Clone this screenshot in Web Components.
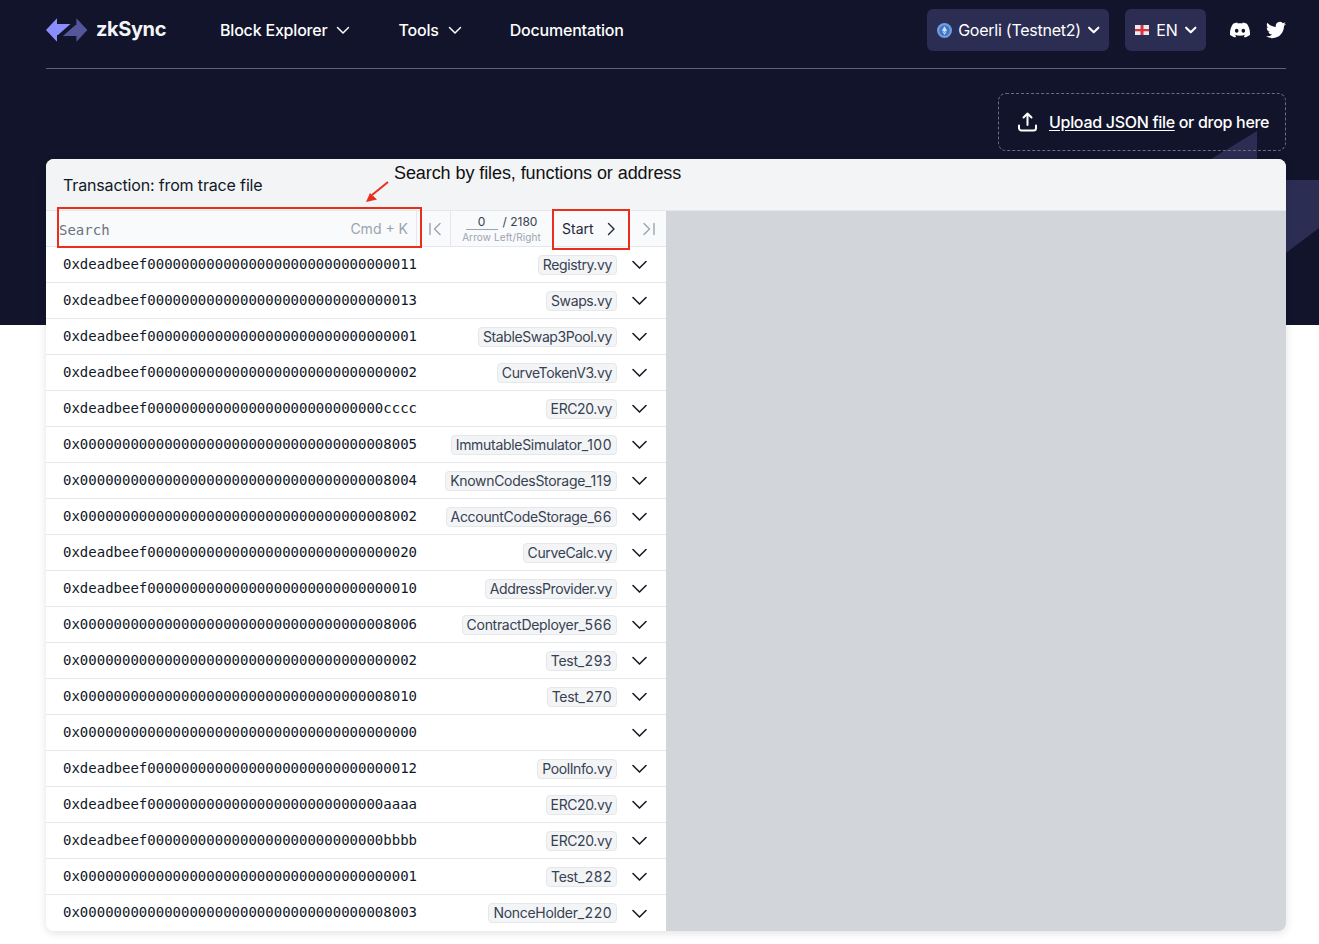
<!DOCTYPE html>
<html>
<head>
<meta charset="utf-8">
<title>zkSync trace viewer</title>
<style>
  html, body { margin: 0; padding: 0; background: #fff; }
  body { font-family: Inter, "Liberation Sans", sans-serif; color: #111827; }
</style>
</head>
<body>
<zk-page>
  <zk-header slot="header"></zk-header>
  <zk-upload slot="upload"></zk-upload>
  <zk-trace slot="trace">
    <zk-file addr="0xdeadbeef00000000000000000000000000000011" name="Registry.vy"></zk-file>
    <zk-file addr="0xdeadbeef00000000000000000000000000000013" name="Swaps.vy"></zk-file>
    <zk-file addr="0xdeadbeef00000000000000000000000000000001" name="StableSwap3Pool.vy"></zk-file>
    <zk-file addr="0xdeadbeef00000000000000000000000000000002" name="CurveTokenV3.vy"></zk-file>
    <zk-file addr="0xdeadbeef0000000000000000000000000000cccc" name="ERC20.vy"></zk-file>
    <zk-file addr="0x0000000000000000000000000000000000008005" name="ImmutableSimulator_100"></zk-file>
    <zk-file addr="0x0000000000000000000000000000000000008004" name="KnownCodesStorage_119"></zk-file>
    <zk-file addr="0x0000000000000000000000000000000000008002" name="AccountCodeStorage_66"></zk-file>
    <zk-file addr="0xdeadbeef00000000000000000000000000000020" name="CurveCalc.vy"></zk-file>
    <zk-file addr="0xdeadbeef00000000000000000000000000000010" name="AddressProvider.vy"></zk-file>
    <zk-file addr="0x0000000000000000000000000000000000008006" name="ContractDeployer_566"></zk-file>
    <zk-file addr="0x0000000000000000000000000000000000000002" name="Test_293"></zk-file>
    <zk-file addr="0x0000000000000000000000000000000000008010" name="Test_270"></zk-file>
    <zk-file addr="0x0000000000000000000000000000000000000000"></zk-file>
    <zk-file addr="0xdeadbeef00000000000000000000000000000012" name="PoolInfo.vy"></zk-file>
    <zk-file addr="0xdeadbeef0000000000000000000000000000aaaa" name="ERC20.vy"></zk-file>
    <zk-file addr="0xdeadbeef0000000000000000000000000000bbbb" name="ERC20.vy"></zk-file>
    <zk-file addr="0x0000000000000000000000000000000000000001" name="Test_282"></zk-file>
    <zk-file addr="0x0000000000000000000000000000000000008003" name="NonceHolder_220" last></zk-file>
  </zk-trace>
</zk-page>

<script>
const chevron = (w, sw) => `<svg width="${w}" height="${w}" viewBox="0 0 16 16" fill="none" stroke="currentColor" stroke-width="${sw}" stroke-linecap="round" stroke-linejoin="round"><path d="M2.5 5.5 8 11l5.5-5.5"/></svg>`;

// Page shell: dark hero behind the header and the top of the card.
class ZkPage extends HTMLElement {
  connectedCallback() {
    const root = this.attachShadow({mode: 'open'});
    root.innerHTML = `
      <style>
      :host { display: block; position: relative; height: 944px; overflow: hidden; }
      .hero { position: absolute; left: 0; top: 0; right: 0; height: 325px; background: #11142b; overflow: hidden; }
      .hero svg { position: absolute; left: 0; top: 0; }
      .content { position: relative; padding: 0 33px 0 46px; display: flex; flex-direction: column; }
      .upload { display: flex; justify-content: flex-end; padding: 24px 0 8px; }
      </style>
      <div class="hero">
        <svg width="1319" height="325" viewBox="0 0 1319 325"><path fill="#2b2d53" d="M1257 131 1211 159H1257ZM1286 180H1319V228L1286 253Z"/></svg>
      </div>
      <div class="content">
        <slot name="header"></slot>
        <div class="upload"><slot name="upload"></slot></div>
        <slot name="trace"></slot>
      </div>
    `;
  }
}

class ZkHeader extends HTMLElement {
  connectedCallback() {
    const root = this.attachShadow({mode: 'open'});
    root.innerHTML = `
      <style>
      :host { display: flex; align-items: center; height: 60px; padding-bottom: 8px; border-bottom: 1px solid #5f6175; color: #fff; font-size: 16px; font-weight: 500; letter-spacing: -0.2px; }
      .logo { display: flex; align-items: center; gap: 8px; width: 174px; }
      .logo span { font-size: 20px; font-weight: 700; letter-spacing: -0.4px; color: #f3f4f6; margin-top: -3px; }
      nav { display: flex; align-items: center; gap: 47px; flex: 1; }
      nav a { display: flex; align-items: center; gap: 8px; color: #fff; }
      .pill { display: flex; align-items: center; height: 42px; box-sizing: border-box; background: #2b2d53; border-radius: 6px; padding: 0 9px 0 10px; font-weight: 400; letter-spacing: -0.25px; }
      .pill svg.c { margin-left: 6px; }
      .net { margin-right: 16px; }
      .lang { margin-right: 24px; }
      .social { display: flex; align-items: center; gap: 16px; }
      </style>
      <div class="logo">
        <svg width="42" height="24" viewBox="0 0 42 24">
          <path fill="#53569a" d="M41.4 12 30.4 23.7V18H16.9L29.4 7H30.4V.3Z"/>
          <path fill="#8c8dfc" d="M0 12 11 .3V6H24.5L12 17H11V23.7Z"/>
        </svg>
        <span>zkSync</span>
      </div>
      <nav>
        <a>Block Explorer ${chevron(16, 1.5)}</a>
        <a>Tools ${chevron(16, 1.5)}</a>
        <a>Documentation</a>
      </nav>
      <div class="pill net">
        <svg width="15" height="15" viewBox="0 0 16 16" style="margin-right:6px">
          <circle cx="8" cy="8" r="8" fill="#6f9fe0"/>
          <circle cx="8" cy="8" r="5.6" fill="#3f74c4"/>
          <path fill="#cfe0f7" d="M8 3.4 5.3 8 8 9.6 10.7 8Z"/>
          <path fill="#cfe0f7" d="M5.3 8.7 8 12.6l2.7-3.9L8 10.3Z"/>
        </svg>
        Goerli (Testnet2) <svg class="c" width="13.5" height="13.5" viewBox="0 0 16 16" fill="none" stroke="currentColor" stroke-width="2.5" stroke-linecap="round" stroke-linejoin="round"><path d="M2.5 5.5 8 11l5.5-5.5"/></svg>
      </div>
      <div class="pill lang">
        <svg width="14" height="10" viewBox="0 0 14 10" style="margin-right:7px">
          <rect width="14" height="10" fill="#e8eaf0"/>
          <path fill="#d8343f" d="M5.5 0h3v4H14v2.2H8.5V10h-3V6.2H0V4h5.5Z"/>
        </svg>
        EN <svg class="c" width="13.5" height="13.5" viewBox="0 0 16 16" fill="none" stroke="currentColor" stroke-width="2.5" stroke-linecap="round" stroke-linejoin="round"><path d="M2.5 5.5 8 11l5.5-5.5"/></svg>
      </div>
      <div class="social">
        <svg width="20" height="20" viewBox="0 0 24 24" fill="#fff"><path d="M20.317 4.3698a19.7913 19.7913 0 00-4.8851-1.5152.0741.0741 0 00-.0785.0371c-.211.3753-.4447.8648-.6083 1.2495-1.8447-.2762-3.68-.2762-5.4868 0-.1636-.3933-.4058-.8742-.6177-1.2495a.077.077 0 00-.0785-.037 19.7363 19.7363 0 00-4.8852 1.515.0699.0699 0 00-.0321.0277C.5334 9.0458-.319 13.5799.0992 18.0578a.0824.0824 0 00.0312.0561c2.0528 1.5076 4.0413 2.4228 5.9929 3.0294a.0777.0777 0 00.0842-.0276c.4616-.6304.8731-1.2952 1.226-1.9942a.076.076 0 00-.0416-.1057c-.6528-.2476-1.2743-.5495-1.8722-.8923a.077.077 0 01-.0076-.1277c.1258-.0943.2517-.1923.3718-.2914a.0743.0743 0 01.0776-.0105c3.9278 1.7933 8.18 1.7933 12.0614 0a.0739.0739 0 01.0785.0095c.1202.099.246.1981.3728.2924a.077.077 0 01-.0066.1276 12.2986 12.2986 0 01-1.873.8914.0766.0766 0 00-.0407.1067c.3604.698.7719 1.3628 1.225 1.9932a.076.076 0 00.0842.0286c1.961-.6067 3.9495-1.5219 6.0023-3.0294a.077.077 0 00.0313-.0552c.5004-5.177-.8382-9.6739-3.5485-13.6604a.061.061 0 00-.0312-.0286zM8.02 15.3312c-1.1825 0-2.1569-1.0857-2.1569-2.419 0-1.3332.9555-2.4189 2.157-2.4189 1.2108 0 2.1757 1.0952 2.1568 2.419 0 1.3332-.9555 2.4189-2.1569 2.4189zm7.9748 0c-1.1825 0-2.1569-1.0857-2.1569-2.419 0-1.3332.9554-2.4189 2.1569-2.4189 1.2108 0 2.1757 1.0952 2.1568 2.419 0 1.3332-.946 2.4189-2.1568 2.4189Z"/></svg>
        <svg width="20" height="20" viewBox="0 0 24 24" fill="#fff"><path d="M23.953 4.57a10 10 0 01-2.825.775 4.958 4.958 0 002.163-2.723c-.951.555-2.005.959-3.127 1.184a4.92 4.92 0 00-8.384 4.482C7.69 8.095 4.067 6.13 1.64 3.162a4.822 4.822 0 00-.666 2.475c0 1.71.87 3.213 2.188 4.096a4.904 4.904 0 01-2.228-.616v.06a4.923 4.923 0 003.946 4.827 4.996 4.996 0 01-2.212.085 4.936 4.936 0 004.604 3.417 9.867 9.867 0 01-6.102 2.105c-.39 0-.779-.023-1.17-.067a13.995 13.995 0 007.557 2.209c9.053 0 13.998-7.496 13.998-13.985 0-.21 0-.42-.015-.63A9.935 9.935 0 0024 4.59z"/></svg>
      </div>
    `;
  }
}

class ZkUpload extends HTMLElement {
  connectedCallback() {
    const root = this.attachShadow({mode: 'open'});
    root.innerHTML = `
      <style>
      :host { display: flex; align-items: center; gap: 12px; box-sizing: border-box; width: 288px; height: 58px; padding: 0 16px 0 19px; border: 1px dashed #6b6d80; border-radius: 8px; color: #fff; font-size: 16px; font-weight: 500; letter-spacing: -0.3px; white-space: nowrap; }
      svg { flex: none; }
      span { margin-left: auto; }
      u { text-underline-offset: 2px; }
      </style>
      <svg width="19" height="20" viewBox="0 0 19 20" fill="none" stroke="#fff" stroke-width="2" stroke-linecap="round" stroke-linejoin="round"><path d="M9.5 13V2M5.5 5.5l4-4 4 4M1 13.5v2.5a2.5 2.5 0 0 0 2.5 2.5h12a2.5 2.5 0 0 0 2.5-2.5v-2.5"/></svg>
      <span><u>Upload JSON file</u> or drop here</span>
    `;
  }
}

// The trace card. Its annotations (red boxes, arrow, caption) lie over the toolbar.
class ZkTrace extends HTMLElement {
  connectedCallback() {
    const root = this.attachShadow({mode: 'open'});
    root.innerHTML = `
      <style>
      :host { display: block; position: relative; box-sizing: border-box; width: 1240px; height: 772px; background: #f9fafb; border-radius: 8px; box-shadow: 0 2px 8px rgba(0,0,0,.12); }
      .inner { height: 100%; border-radius: 8px; overflow: hidden; display: flex; flex-direction: column; }
      .title { height: 52px; flex: none; box-sizing: border-box; padding: 16px 17px 0; font-size: 16px; letter-spacing: -0.15px; background: #f3f4f6; border-bottom: 1px solid #e5e7eb; }
      .body { flex: 1; display: flex; min-height: 0; }
      .left { width: 620px; flex: none; background: #fff; }
      .right { flex: 1; background: #d2d5d9; }
      .bar { display: flex; height: 36px; box-sizing: border-box; background: #f9fafb; border-bottom: 1px solid #e5e7eb; align-items: stretch; }
      .search { width: 371px; flex: none; box-sizing: border-box; display: flex; align-items: center; justify-content: space-between; padding: 2px 8px 0 13px; border-right: 1px solid #e5e7eb; font: 14px "DejaVu Sans Mono", monospace; color: #6b7280; }
      .search b { font: 400 14px Inter, sans-serif; color: #9ca3af; margin-top: -2px; }
      .nav { display: flex; align-items: center; justify-content: center; color: #9ca3af; padding-left: 3px; }
      .first { width: 34px; border-right: 1px solid #e5e7eb; box-sizing: border-box; flex: none; }
      .pos { width: 101px; flex: none; display: flex; flex-direction: column; align-items: center; font-size: 12px; color: #374151; padding-top: 3px; box-sizing: border-box; }
      .pos i { font-style: normal; display: block; line-height: 16px; }
      .pos i u { text-decoration: none; display: inline-block; width: 32px; border-bottom: 1px solid #9ca3af; text-align: center; margin-right: 5px; line-height: 15px; }
      .pos small { font-size: 10px; line-height: 14px; color: #9ca3af; white-space: nowrap; letter-spacing: 0.1px; }
      .start { width: 76px; flex: none; box-sizing: border-box; display: flex; align-items: center; justify-content: space-between; padding: 0 9px 0 10px; font-size: 14px; color: #1f2937; }
      .last { flex: 1; }
      .red { position: absolute; border: 2px solid #ea2e1c; box-sizing: border-box; pointer-events: none; }
      .caption { position: absolute; left: 348px; top: 4px; font: 18px "Liberation Sans", Arial, sans-serif; letter-spacing: -0.08px; color: #111; white-space: nowrap; }
      .arrow { position: absolute; left: 318px; top: 22px; }
      </style>
      <div class="inner">
        <div class="title">Transaction: from trace file</div>
        <div class="body">
          <div class="left">
            <div class="bar">
              <div class="search"><span>Search</span><b>Cmd + K</b></div>
              <div class="nav first"><svg width="16" height="16" viewBox="0 0 16 16" fill="none" stroke="currentColor" stroke-width="1.4" stroke-linecap="round" stroke-linejoin="round"><path d="M3 2.5v11M13 2.5 7.5 8l5.5 5.5"/></svg></div>
              <div class="pos"><i><u>0</u>/ 2180</i><small>Arrow Left/Right</small></div>
              <div class="start"><span>Start</span><svg width="16" height="16" viewBox="0 0 16 16" fill="none" stroke="currentColor" stroke-width="1.4" stroke-linecap="round" stroke-linejoin="round"><path d="M5.5 2.5 11 8l-5.5 5.5"/></svg></div>
              <div class="nav last"><svg width="16" height="16" viewBox="0 0 16 16" fill="none" stroke="currentColor" stroke-width="1.4" stroke-linecap="round" stroke-linejoin="round"><path d="M13 2.5v11M3 2.5 8.5 8 3 13.5"/></svg></div>
            </div>
            <slot></slot>
          </div>
          <div class="right"></div>
        </div>
      </div>
      <div class="red" style="left:11px;top:48px;width:365px;height:41px"></div>
      <div class="red" style="left:506px;top:50px;width:78px;height:41px"></div>
      <svg class="arrow" width="26" height="24" viewBox="0 0 26 24"><path d="M24 1 8 14" stroke="#ea2e1c" stroke-width="2" fill="none"/><path d="M2 21l4-9 7 6.5Z" fill="#ea2e1c"/></svg>
      <div class="caption">Search by files, functions or address</div>
    `;
  }
}

class ZkFile extends HTMLElement {
  connectedCallback() {
    const root = this.attachShadow({mode: 'open'});
    const name = this.getAttribute('name');
    // Digits run wider than the letters in the reference, so the suffix gets its own spacing.
    const label = name ? name.replace(/(_\d+)$/, '<span class="num">$1</span>') : '';
    root.innerHTML = `
      <style>
      :host { display: flex; align-items: center; height: 36px; box-sizing: border-box; padding-left: 17px; border-bottom: 1px solid #e5e7eb; }
      :host([last]) { border-bottom: 0; }
      .addr { font: 14px "DejaVu Sans Mono", monospace; color: #111827; flex: 1; margin-top: -2px; }
      .tag { font-size: 14px; line-height: 18px; letter-spacing: -0.38px; color: #374151; background: #f3f4f6; border: 1px solid #e5e7eb; border-radius: 4px; padding: 0 4px; white-space: nowrap; }
      .tag.sfx { letter-spacing: -0.3px; }
      .num { letter-spacing: 0.5px; }
      .chev { width: 45px; margin-right: 4px; flex: none; display: flex; justify-content: center; color: #111827; }
      </style>
      <span class="addr">${this.getAttribute('addr')}</span>
      ${name ? `<span class="tag${label !== name ? ' sfx' : ''}">${label}</span>` : ''}
      <span class="chev">${chevron(19, 1.3)}</span>
    `;
  }
}

customElements.define("zk-page", ZkPage);
customElements.define("zk-header", ZkHeader);
customElements.define("zk-upload", ZkUpload);
customElements.define("zk-trace", ZkTrace);
customElements.define("zk-file", ZkFile);
</script>
</body>
</html>
